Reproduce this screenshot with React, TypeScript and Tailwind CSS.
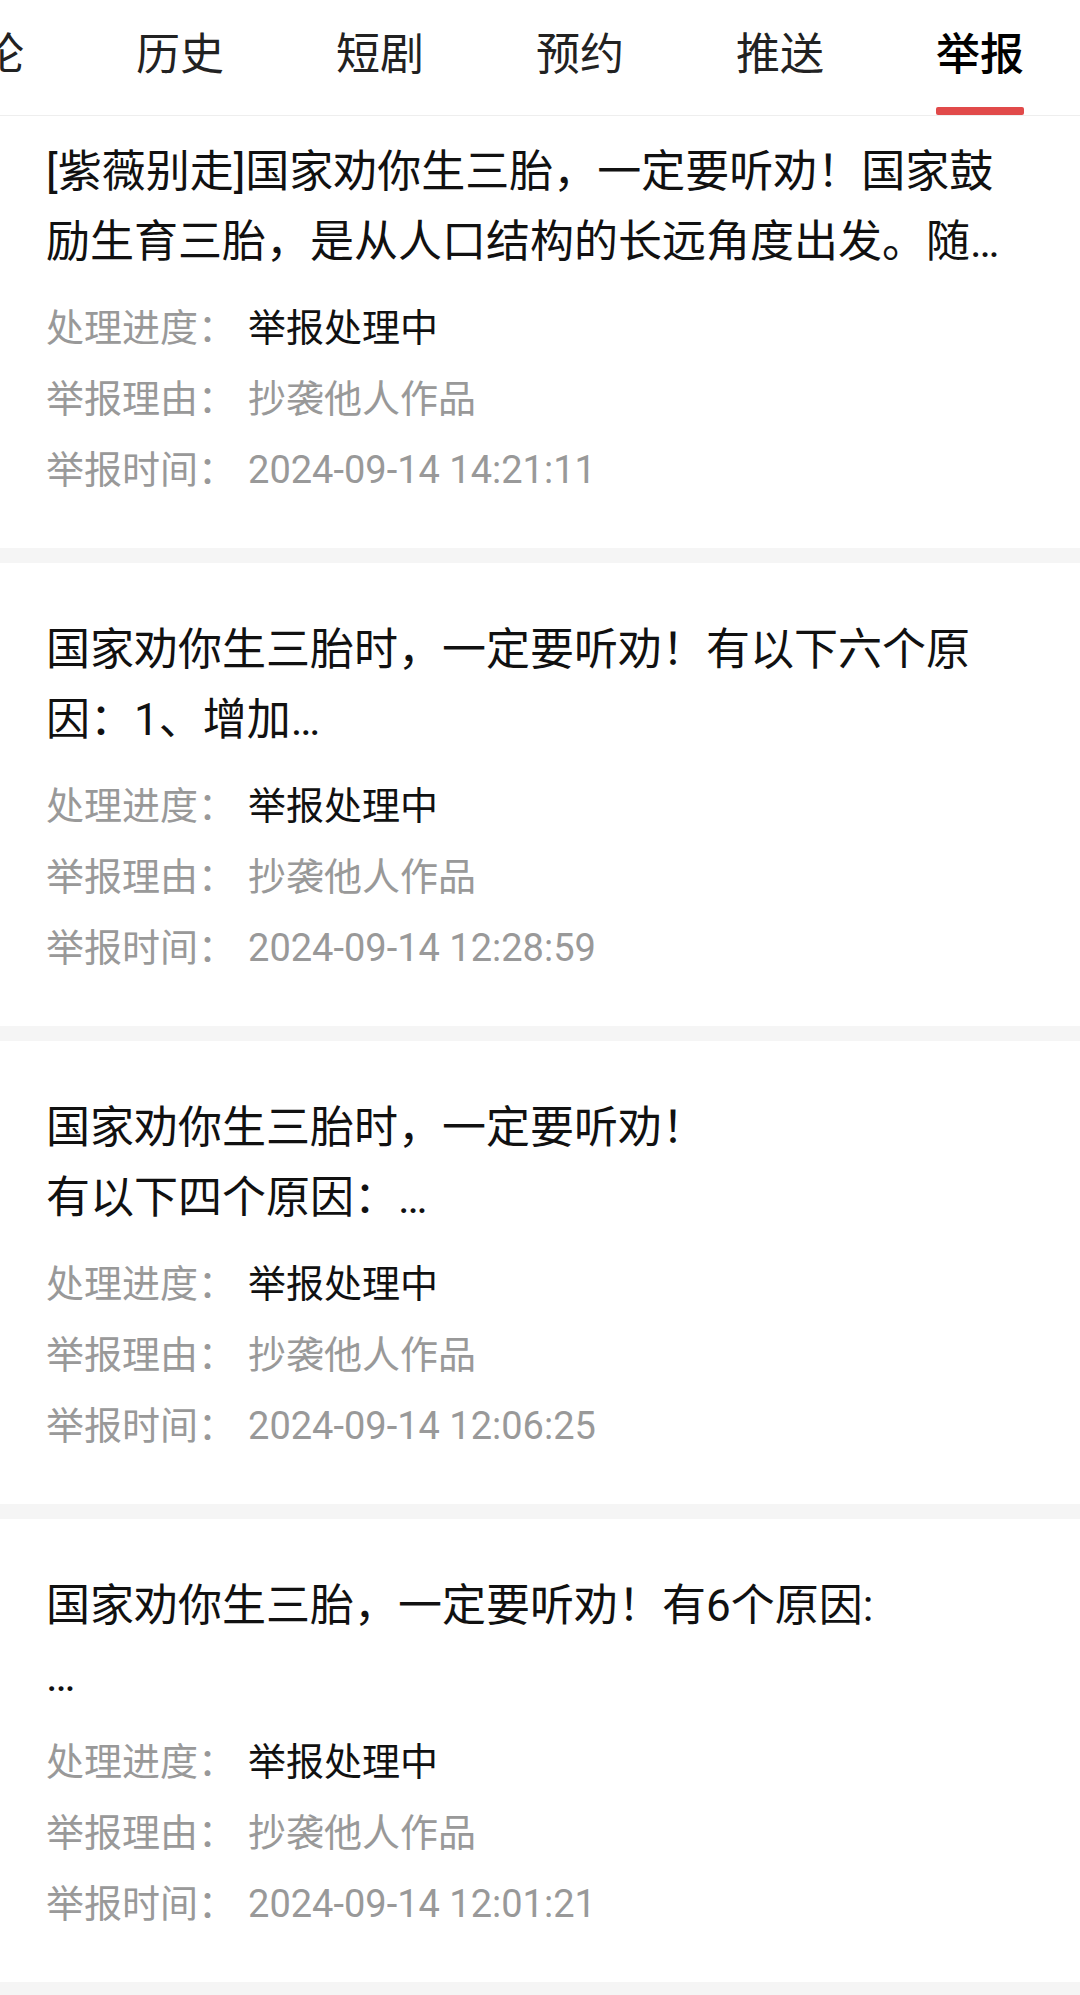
const tabs = ["评论", "历史", "短剧", "预约", "推送", "举报"];

type Report = {
  lines: string[];
  status: string;
  reason: string;
  time: string;
};

const reports: Report[] = [
  {
    lines: ["[紫薇别走]国家劝你生三胎，一定要听劝！国家鼓", "励生育三胎，是从人口结构的长远角度出发。随…"],
    status: "举报处理中",
    reason: "抄袭他人作品",
    time: "2024-09-14 14:21:11",
  },
  {
    lines: ["国家劝你生三胎时，一定要听劝！有以下六个原", "因：1、增加…"],
    status: "举报处理中",
    reason: "抄袭他人作品",
    time: "2024-09-14 12:28:59",
  },
  {
    lines: ["国家劝你生三胎时，一定要听劝！", "有以下四个原因：…"],
    status: "举报处理中",
    reason: "抄袭他人作品",
    time: "2024-09-14 12:06:25",
  },
  {
    lines: ["国家劝你生三胎，一定要听劝！有6个原因:", "…"],
    status: "举报处理中",
    reason: "抄袭他人作品",
    time: "2024-09-14 12:01:21",
  },
];

const Row = ({ label, value, dark }: { label: string; value: string; dark?: boolean }) => (
  <div className="flex flex-row items-center h-[71px] text-[38px] leading-[71px] whitespace-nowrap">
    <span className="text-[#999999]">{label}：</span>
    <span className={`ml-[12px] ${dark ? "text-[#111111]" : "text-[#999999]"}`}>{value}</span>
  </div>
);

const ReportCard = ({ report, first }: { report: Report; first?: boolean }) => (
  <div className={`bg-white px-[46px] pb-[42px] border-b-[15px] border-[#f5f5f5] ${first ? "pt-[21px]" : "pt-[52px]"}`}>
    <div className="flex flex-col text-[44px] leading-[70px] text-[#111111]">
      {report.lines.map((line, i) => (
        <div key={i} className="whitespace-nowrap overflow-hidden">{line}</div>
      ))}
    </div>
    <div className="mt-[16px] flex flex-col">
      <Row label="处理进度" value={report.status} dark />
      <Row label="举报理由" value={report.reason} />
      <Row label="举报时间" value={report.time} />
    </div>
  </div>
);

export default function App() {
  const active = "举报";

  return (
    <div className="w-[1080px] min-h-[1995px] bg-white overflow-hidden font-[Roboto,'Noto_Sans_CJK_SC',sans-serif]">
      {/* tab bar is scrolled, so the first tab sits partly off the left edge */}
      <div className="h-[116px] border-b border-[#eeeeee] overflow-hidden">
        <div className="flex flex-row -ml-[120px]">
          {tabs.map((tab) => (
            <div key={tab} className="relative w-[200px] h-[115px] shrink-0 flex justify-center pt-[33px]">
              <span className={`text-[44px] leading-[44px] ${tab === active ? "text-black font-medium" : "text-[#222222]"}`}>{tab}</span>
              {tab === active && (
                <div className="absolute bottom-0 left-[56px] w-[88px] h-[8px] rounded-[2px] bg-[#e14a4a]" />
              )}
            </div>
          ))}
        </div>
      </div>
      {reports.map((r, i) => (
        <ReportCard key={i} report={r} first={i === 0} />
      ))}
    </div>
  );
}
